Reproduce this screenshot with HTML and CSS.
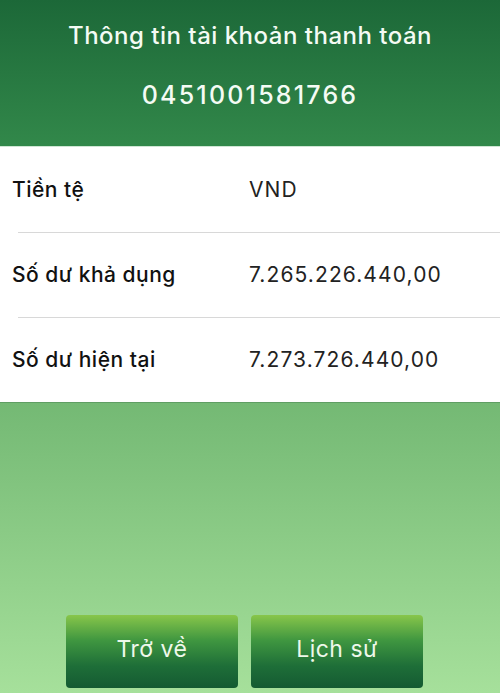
FILE: index.html
```html
<!DOCTYPE html>
<html>
<head>
  <meta charset="utf-8">
  <title>Thông tin tài khoản thanh toán</title>
  <link rel="stylesheet" href="styles.css">
</head>
<body>
  <div class="screen">
    <div class="header">
      <h1 class="title">Thông tin tài khoản thanh toán</h1>
      <div class="account">0451001581766</div>
    </div>
    <div class="info">
      <div class="row">
        <div class="label">Tiền tệ</div>
        <div class="value">VND</div>
      </div>
      <div class="row">
        <div class="label">Số dư khả dụng</div>
        <div class="value">7.265.226.440,00</div>
      </div>
      <div class="row">
        <div class="label">Số dư hiện tại</div>
        <div class="value">7.273.726.440,00</div>
      </div>
    </div>
    <div class="bottom">
      <div class="buttons">
        <button class="btn">Trở về</button>
        <button class="btn">Lịch sử</button>
      </div>
    </div>
  </div>
</body>
</html>
```

FILE: styles.css
```css
html, body {
  margin: 0;
  padding: 0;
  height: 100%;
}
body {
  font-family: Inter, "Liberation Sans", sans-serif;
}
.screen {
  display: flex;
  flex-direction: column;
  height: 693px;
  overflow: hidden;
}
.header {
  height: 146px;
  background: linear-gradient(to bottom, #1c6838, #32884a);
  border-bottom: 1px solid #cfe6d4;
  color: #f4fbf4;
  text-align: center;
  display: flex;
  flex-direction: column;
  align-items: center;
}
.title {
  margin: 0;
  padding-top: 21px;
  font-size: 24px;
  font-weight: 500;
  line-height: 30px;
  letter-spacing: 0.5px;
}
.account {
  margin-top: 29px;
  font-size: 25px;
  font-weight: 500;
  line-height: 30px;
  letter-spacing: 2.2px;
}
.info {
  background: #fff;
}
.row {
  display: flex;
  align-items: center;
  height: 85px;
  padding-left: 12px;
  font-size: 21px;
  font-weight: 500;
  color: #111;
  position: relative;
}
.row + .row::before {
  content: "";
  position: absolute;
  top: 0;
  left: 18px;
  right: 0;
  border-top: 1px solid #d8d8d8;
}
.label {
  width: 237px;
  letter-spacing: 0.5px;
}
.value {
  font-weight: 400;
  color: #222;
  letter-spacing: 1.1px;
}
.bottom {
  flex: 1;
  background: linear-gradient(to bottom, #74b974, #a6e09b);
  border-top: 1px solid #5f9e63;
  display: flex;
  flex-direction: column;
  justify-content: flex-end;
}
.buttons {
  display: flex;
  gap: 13px;
  padding-left: 66px;
  margin-bottom: 5px;
}
.btn {
  width: 172px;
  height: 73px;
  border: none;
  border-radius: 4px;
  background: linear-gradient(to bottom, #88c64a, #3f9640 35%, #1e6e38 70%, #145a32);
  color: #eef8ea;
  font-family: Inter, "Liberation Sans", sans-serif;
  font-size: 23px;
  letter-spacing: 0.5px;
  padding-bottom: 6px;
}
```
